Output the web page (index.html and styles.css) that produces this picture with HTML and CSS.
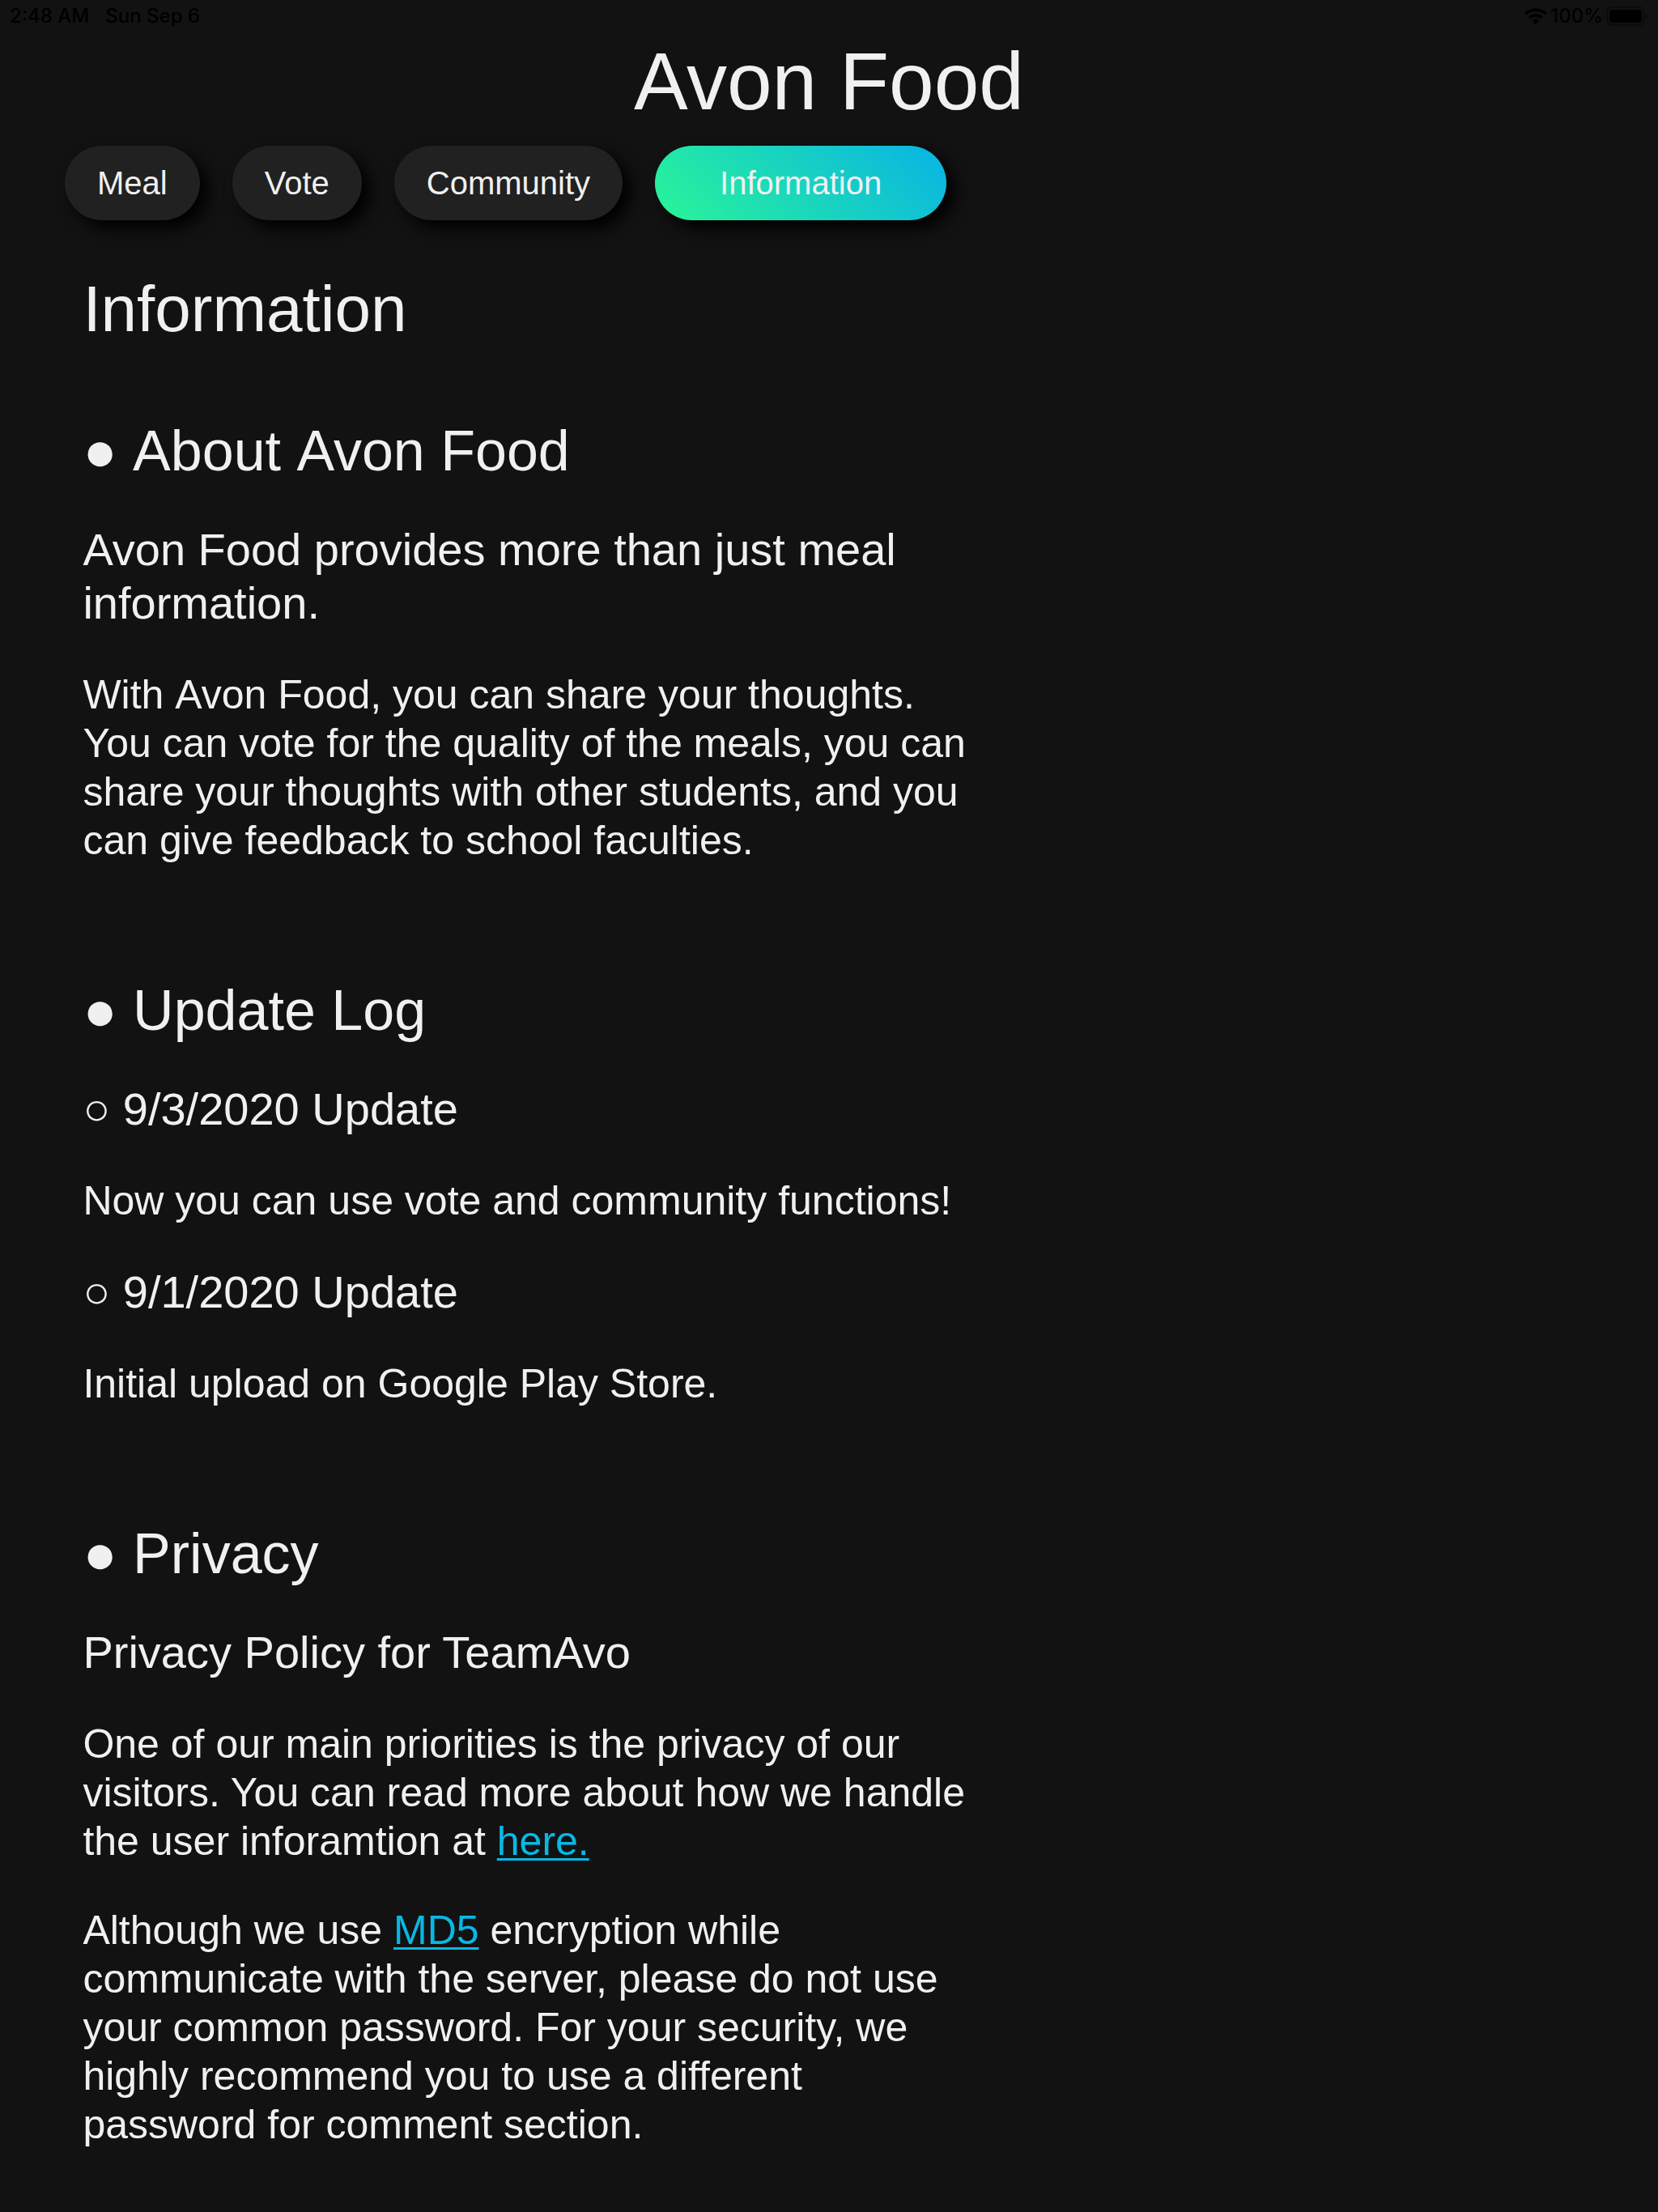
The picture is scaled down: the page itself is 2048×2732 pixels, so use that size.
FILE: index.html
```html
<!DOCTYPE html>
<html lang="en">
<head>
  <meta charset="utf-8">
  <meta name="viewport" content="width=device-width, initial-scale=1">
  <title>Avon Food</title>
  <link rel="stylesheet" href="styles.css">
</head>
<body>
  <div class="status">
    <div class="status-group status-left">
      <span>2:48 AM</span>
      <span>Sun Sep 6</span>
    </div>
    <div class="status-group status-right">
      <svg class="wifi" viewBox="0 0 28 20" width="28" height="20" aria-hidden="true">
        <path d="M1.500 7.200a18 18 0 0 1 25 0M6.200 12a11.200 11.200 0 0 1 15.600 0" fill="none" stroke="#000" stroke-width="3.600"/>
        <path d="M14 20l-4.400-4.600a6.400 6.400 0 0 1 8.800 0z" fill="#000"/>
      </svg>
      <span>100%</span>
      <svg class="battery" viewBox="0 0 54 24" width="54" height="24" aria-hidden="true">
        <rect x="1" y="1" width="46" height="22" rx="7" fill="none" stroke="#0b0b0b" stroke-width="2"/>
        <rect x="4" y="4" width="40" height="16" rx="4" fill="#000"/>
        <path d="M50 8c3 1 3 7 0 8z" fill="#0b0b0b"/>
      </svg>
    </div>
  </div>

  <header>
    <h1 class="title">Avon Food</h1>
    <nav class="tabs">
      <button class="tab" type="button">Meal</button>
      <button class="tab" type="button">Vote</button>
      <button class="tab" type="button">Community</button>
      <button class="tab tab-active" type="button" aria-current="page">Information</button>
    </nav>
  </header>

  <main class="content">
    <h2 class="page-heading">Information</h2>

    <section class="section">
      <h3 class="section-heading">●&nbsp;About&nbsp;Avon Food</h3>
      <h4 class="lead">Avon Food provides more than just meal information.</h4>
      <p class="text">With&nbsp;Avon Food, you can share your thoughts. You can vote for the quality of the meals, you can share your thoughts with other students, and you can give feedback to school faculties.</p>
    </section>

    <section class="section">
      <h3 class="section-heading">● Update Log</h3>
      <h4 class="lead">○ 9/3/2020 Update</h4>
      <p class="text">Now you can use vote and community functions!</p>
      <h4 class="lead">○ 9/1/2020 Update</h4>
      <p class="text">Initial upload on Google Play Store.</p>
    </section>

    <section class="section">
      <h3 class="section-heading">● Privacy</h3>
      <h4 class="lead">Privacy Policy for TeamAvo</h4>
      <p class="text">One of our main priorities is the privacy of our visitors. You can read more about how we handle the user inforamtion at <a class="link" href="#privacy">here.</a></p>
      <p class="text">Although we use <a class="link" href="#md5">MD5</a> encryption while communicate with the server, please do not use your common password. For your security, we highly recommend you to use a different password for comment section.</p>
    </section>
  </main>
</body>
</html>
```
FILE: styles.css
```css
* {
  box-sizing: border-box;
}

body {
  margin: 0;
  background: #121212;
  color: #f0f0f0;
  font-family: "Liberation Sans", Arial, sans-serif;
}

h1, h2, h3, h4, p {
  margin: 0;
  font-weight: 400;
}

.status {
  display: flex;
  justify-content: space-between;
  height: 40px;
  padding: 0 10px 0 12px;
  color: #000;
  font: 500 24px/40px Inter, sans-serif;
}

.status-group {
  display: flex;
  align-items: center;
}

.status-left {
  gap: 20px;
}

.status-right {
  gap: 4px;
}

.title {
  font-size: 100px;
  line-height: 120px;
  text-align: center;
}

.tabs {
  display: flex;
  gap: 40px;
  padding: 20px 80px 0;
}

.tab {
  padding: 0 40px;
  border: 0;
  border-radius: 46px;
  background: #212121;
  box-shadow: 10px 10px 20px #000;
  color: inherit;
  font-family: inherit;
  font-size: 40px;
  line-height: 92px;
}

.tab-active {
  padding: 0 80px;
  background: linear-gradient(45deg, #2af598, #08b3e5);
}

.content {
  width: 54%;
  margin: 64px 5% 80px;
}

.page-heading {
  margin-bottom: 90px;
  font-size: 80px;
  line-height: 92px;
}

.section {
  display: flex;
  flex-direction: column;
  gap: 50px;
}

.section + .section {
  margin-top: 141px;
}

.section-heading {
  font-size: 70px;
  line-height: 78px;
}

.lead {
  font-size: 56px;
  line-height: 66px;
}

.text {
  font-size: 50px;
  line-height: 60px;
}

.link {
  color: #08b8e5;
  text-decoration-thickness: 3px;
  text-underline-offset: 4px;
}
```
